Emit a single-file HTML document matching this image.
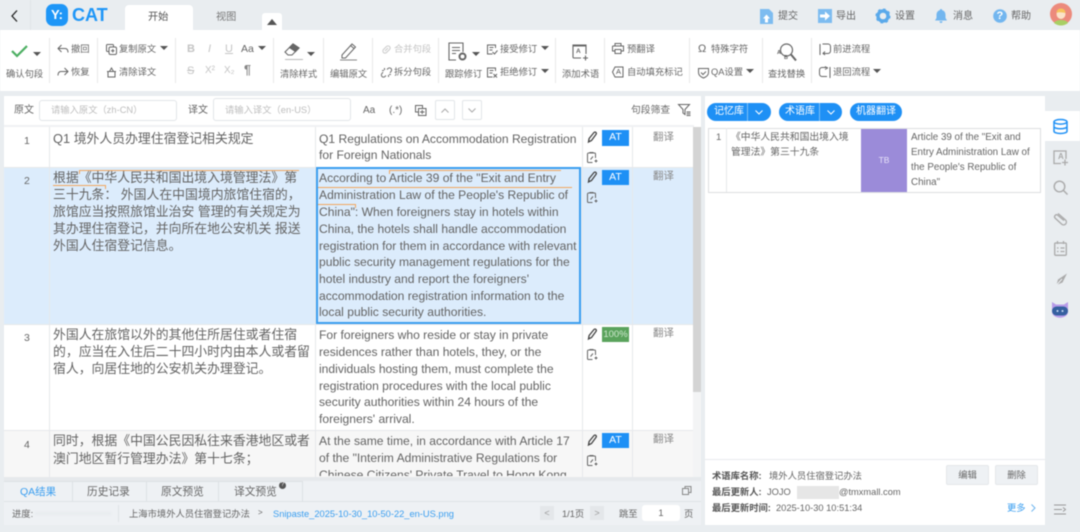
<!DOCTYPE html>
<html lang="zh"><head><meta charset="utf-8"><title>YiCAT</title>
<style>
html,body{margin:0;padding:0;width:1080px;height:532px;overflow:hidden;background:#e9edf0}
#r{position:relative;width:1080px;height:532px;overflow:hidden;font-family:"Liberation Sans","Noto Sans CJK SC",sans-serif;color:#666;filter:blur(.4px)}
.a{position:absolute}
.t{position:absolute;white-space:nowrap;line-height:16px;height:16px}
.s{font-size:9.3px}
.g{color:#c4c4c4}
.c{font-size:12.85px;color:#636363}
.e{font-size:12.1px;color:#636363}
.sep{position:absolute;width:1px;top:38px;height:45px;background:#e8e8e8}
svg{position:absolute;overflow:visible}
.tri{position:absolute;width:0;height:0;border-left:4px solid transparent;border-right:4px solid transparent;border-top:4px solid #555}
.at{position:absolute;left:602px;width:27px;height:15px;background:#1e90f5;color:#fff;font-size:10.5px;line-height:15px;text-align:center}
.ln{position:absolute;height:1px;background:#e6e8eb}
.v{position:absolute;width:1px;background:#e6e8eb}
.or{position:absolute;height:1px;background:#f2a65e}
.pill{position:absolute;top:103px;height:18px;border-radius:9px;background:#1e90f5;color:#fff;font-size:10px;line-height:18px}
.tr{color:#8a8a8a;font-size:10.5px}
</style></head><body><div id="r">

<!-- top bar -->
<div class="a" style="left:30px;top:0;width:1px;height:30px;background:#e0e4e7"></div>
<svg style="left:10px;top:9px" width="10" height="14" fill="none" stroke="#222" stroke-width="1.3"><path d="M7 1.500L2 7l5 5.500"/></svg>
<!-- logo -->
<div class="a" style="left:46px;top:4px;width:22px;height:22px;border-radius:7px;background:#1e96f7;color:#fff;font-weight:bold;font-size:13px;line-height:21px;text-align:center">Y:</div>
<div class="t" style="left:72px;top:6px;font-size:18px;font-weight:bold;color:#1e96f7;line-height:18px;height:18px">CAT</div>
<div class="a" style="left:125px;top:5px;width:68px;height:25px;background:#fff;border-radius:4px 4px 0 0"></div>
<div class="t" style="left:148px;top:10px;font-size:10.2px;color:#555">开始</div>
<div class="t" style="left:216px;top:10px;font-size:10.2px;color:#777">视图</div>
<div class="a" style="left:262px;top:13px;width:20px;height:17px;background:#fff;border-radius:3px 3px 0 0"></div>
<div class="a" style="left:267px;top:19px;width:0;height:0;border-left:5.500px solid transparent;border-right:5.500px solid transparent;border-bottom:6px solid #555"></div>

<svg style="left:760px;top:9px" width="14" height="15"><path d="M0 0h9l4 4v11H0z" fill="#7dbcf0"/><path d="M6.500 5.500l3.500 4H8v4H5v-4H3z" fill="#fff"/></svg>
<div class="t" style="left:778px;top:9px;font-size:10px">提交</div>
<svg style="left:818px;top:9px" width="14" height="14"><path d="M0 0h14v14H0z" fill="#7dbcf0"/><path d="M2 5.500h5V2.500l5 4.500-5 4.500V8.500H2z" fill="#fff"/></svg>
<div class="t" style="left:836px;top:9px;font-size:10px">导出</div>
<svg style="left:876px;top:9px" width="14" height="14"><circle cx="7" cy="7" r="5" fill="none" stroke="#5aa9ea" stroke-width="3.400"/><circle cx="7" cy="7" r="6.900" fill="none" stroke="#5aa9ea" stroke-width="1.300" stroke-dasharray="2.600 2.800"/></svg>
<div class="t" style="left:895px;top:9px;font-size:10px">设置</div>
<svg style="left:935px;top:9px" width="12" height="14"><path d="M6 0c.8 0 1.200.5 1.200 1.200C9.500 1.800 10.500 3.600 10.500 6v3L12 11.500H0L1.500 9V6c0-2.400 1-4.200 3.300-4.800C4.800.5 5.200 0 6 0zM4.500 12.300h3C7.500 13.300 6.800 14 6 14s-1.500-.7-1.500-1.700z" fill="#72b6ef"/></svg>
<div class="t" style="left:953px;top:9px;font-size:10px">消息</div>
<svg style="left:993px;top:9px" width="14" height="14"><circle cx="7" cy="7" r="6.800" fill="#72b6ef"/></svg>
<div class="t" style="left:996.500px;top:8px;font-size:11px;color:#fff;font-weight:bold">?</div>
<div class="t" style="left:1011px;top:9px;font-size:10px">帮助</div>
<svg style="left:1050px;top:3px" width="22" height="22"><circle cx="11" cy="11" r="11" fill="#ec8a7c"/><path d="M4 20c2-4 12-4 14 0a11 11 0 0 1-14 0z" fill="#a8cf64"/><ellipse cx="11" cy="11" rx="4.500" ry="5" fill="#fbe3c8"/><path d="M6.500 10c0-6 9-6 9 0-3-.5-6-1.500-9 0z" fill="#f6c35c"/></svg>

<!-- ribbon -->
<div class="a" style="left:0;top:30px;width:1080px;height:61px;background:#fff"></div>
<div class="sep" style="left:49px"></div><div class="sep" style="left:97px"></div><div class="sep" style="left:175px"></div><div class="sep" style="left:273px"></div><div class="sep" style="left:323px"></div><div class="sep" style="left:372px"></div><div class="sep" style="left:438px"></div><div class="sep" style="left:555px"></div><div class="sep" style="left:604px"></div><div class="sep" style="left:689px"></div><div class="sep" style="left:762px"></div><div class="sep" style="left:811px"></div>

<svg style="left:11px;top:45px" width="17" height="13" fill="none" stroke="#4caf62" stroke-width="2.200"><path d="M1 6l5 5L16 1"/></svg>
<div class="tri" style="left:33px;top:52px"></div>
<div class="t s" style="left:6px;top:66px">确认句段</div>

<svg style="left:57px;top:44px" width="12" height="10" fill="none" stroke="#666" stroke-width="1"><path d="M4.500 1L1 4.500 4.500 8M1 4.500h7c2 0 3 1.500 3 4"/></svg>
<div class="t s" style="left:71px;top:41px">撤回</div>
<svg style="left:57px;top:67px" width="12" height="10" fill="none" stroke="#666" stroke-width="1"><path d="M7.500 1L11 4.500 7.500 8M11 4.500H4c-2 0-3 1.500-3 4"/></svg>
<div class="t s" style="left:71px;top:64px">恢复</div>

<svg style="left:106px;top:44px" width="11" height="11" fill="none" stroke="#666" stroke-width="1"><rect x=".5" y=".5" width="7" height="7" rx="1"/><rect x="3" y="3" width="7.500" height="7.500" rx="1.500" fill="#fff"/><path d="M6.800 5v3.500M5 6.800h3.500"/></svg>
<div class="t s" style="left:119px;top:41px">复制原文</div>
<div class="tri" style="left:160px;top:46px"></div>
<svg style="left:106px;top:67px" width="11" height="11" fill="none" stroke="#666" stroke-width="1"><path d="M1 4.500h9M2 4.500v5.500h7V4.500M3.500 4.500L5.500 1l2 3.500"/></svg>
<div class="t s" style="left:119px;top:64px">清除译文</div>

<div class="t g" style="left:187px;top:41px;font-size:11px;font-weight:bold">B</div>
<div class="t g" style="left:208px;top:41px;font-size:11px;font-style:italic">I</div>
<div class="t g" style="left:225px;top:41px;font-size:11px;text-decoration:underline">U</div>
<div class="t" style="left:241px;top:41px;font-size:10.500px">Aa</div>
<div class="tri" style="left:258px;top:46px"></div>
<div class="t g" style="left:187px;top:63px;font-size:11px;text-decoration:line-through">S</div>
<div class="t g" style="left:205px;top:63px;font-size:10px">X²</div>
<div class="t g" style="left:224px;top:63px;font-size:10px">X₂</div>
<div class="t" style="left:244px;top:62px;font-size:12.500px;color:#888;font-weight:bold">¶</div>

<svg style="left:284px;top:42px" width="20" height="19" fill="none" stroke="#666" stroke-width="1.100"><path d="M1 10L9 2l6 4-7 7H4z"/><path d="M9 2l6 4-3.500 3.500-6-4z" fill="#666"/><path d="M1 17.500h18" stroke="#bbb"/></svg>
<div class="tri" style="left:307px;top:52px"></div>
<div class="t s" style="left:280px;top:66px">清除样式</div>

<svg style="left:340px;top:42px" width="18" height="19" fill="none" stroke="#666" stroke-width="1"><path d="M2 13L12 2l3.500 3L5.500 16H2z"/><path d="M10.500 3.500l3.500 3"/><path d="M0 18h17" stroke="#888"/></svg>
<div class="t s" style="left:330px;top:66px">编辑原文</div>

<svg style="left:381px;top:44px" width="11" height="11" fill="none" stroke="#ccc" stroke-width="1.100"><path d="M4 7l3-3M2.500 5.500l3-3a2 2 0 0 1 3 3l-3 3a2 2 0 0 1-3-3z"/></svg>
<div class="t s g" style="left:394px;top:41px">合并句段</div>
<svg style="left:381px;top:67px" width="11" height="11" fill="none" stroke="#777" stroke-width="1.100"><path d="M2 5l-1 1.500a2 2 0 0 0 3 3L5 8.500M9 6l1-1.500a2 2 0 0 0-3-3L6 2.500M3.500 1v2M1 3.500h2M7.500 10V8M10 7.500H8"/></svg>
<div class="t s" style="left:394px;top:64px">拆分句段</div>

<svg style="left:448px;top:42px" width="20" height="20" fill="none" stroke="#666" stroke-width="1.100"><path d="M8 18H1V1h14v9"/><path d="M4 5.500h8M4 8.500h8M4 11.500h4"/><circle cx="14.500" cy="14.500" r="3" stroke-width="2"/></svg>
<div class="tri" style="left:472px;top:52px"></div>
<div class="t s" style="left:445px;top:66px">跟踪修订</div>
<svg style="left:487px;top:44px" width="11" height="11" fill="none" stroke="#666" stroke-width="1"><path d="M8.500 4V1H.5v9h5M2.500 3.500h4M2.500 6h3M5.500 8l2 2 3-3.500"/></svg>
<div class="t s" style="left:500px;top:41px">接受修订</div>
<div class="tri" style="left:541px;top:46px"></div>
<svg style="left:487px;top:67px" width="11" height="11" fill="none" stroke="#666" stroke-width="1"><path d="M8.500 4V1H.5v9h5M2.500 3.500h4M2.500 6h3M6.500 7l3.500 3.500M10 7l-3.500 3.500"/></svg>
<div class="t s" style="left:500px;top:64px">拒绝修订</div>
<div class="tri" style="left:541px;top:69px"></div>

<svg style="left:572px;top:43px" width="17" height="18" fill="none" stroke="#666" stroke-width="1.100"><path d="M9 15H2a1 1 0 0 1-1-1V2h13v9"/><path d="M1 2.500h13" stroke-width="2"/><path d="M11 15h5M13.500 12.500v5"/></svg>
<div class="t" style="left:576px;top:47px;font-size:6.500px;font-weight:bold;color:#666;height:10px;line-height:10px">A</div>
<div class="t s" style="left:562px;top:66px">添加术语</div>

<svg style="left:612px;top:43px" width="12" height="11" fill="none" stroke="#666" stroke-width="1"><path d="M3 3V.5h6V3M.5 3h11v5H9M3 8H.5V3M3 6.500h6v4H3z"/></svg>
<div class="t s" style="left:627px;top:41px">预翻译</div>
<svg style="left:612px;top:66px" width="12" height="12" fill="none" stroke="#666" stroke-width="1"><path d="M3 1h8v10H3L.5 6z"/></svg>
<div class="t" style="left:616px;top:67px;font-size:7.500px;height:10px;line-height:10px;color:#555">A</div>
<div class="t s" style="left:627px;top:64px">自动填充标记</div>

<div class="t" style="left:698px;top:41px;font-size:11px">Ω</div>
<div class="t s" style="left:711px;top:41px">特殊字符</div>
<svg style="left:698px;top:67px" width="11" height="12" fill="none" stroke="#666" stroke-width="1"><path d="M.5 1.500h10v4c0 3-2.500 4.500-5 5.500-2.500-1-5-2.500-5-5.500zM3 5.500l2 2 3-3"/></svg>
<div class="t s" style="left:711px;top:64px">QA设置</div>
<div class="tri" style="left:746px;top:69px"></div>

<svg style="left:777px;top:43px" width="20" height="19" fill="none" stroke="#666" stroke-width="1.200"><circle cx="9.500" cy="7" r="6"/><path d="M14 11.500l5 6" stroke-width="2"/></svg>
<div class="t" style="left:777px;top:49px;font-size:5.500px;font-weight:bold;height:8px;line-height:8px">A</div>
<div class="t" style="left:784px;top:54px;font-size:5.500px;font-weight:bold;height:8px;line-height:8px">B</div>
<div class="t s" style="left:768px;top:66px">查找替换</div>

<svg style="left:819px;top:43px" width="12" height="12" fill="none" stroke="#666" stroke-width="1"><path d="M1 1v11M3.500 1H9a2.500 2.500 0 0 1 2.500 2.500V8A2.500 2.500 0 0 1 9 10.500H4M6 8.500l-2 2 2 1.500"/></svg>
<div class="t s" style="left:833px;top:41px">前进流程</div>
<svg style="left:819px;top:66px" width="12" height="12" fill="none" stroke="#666" stroke-width="1"><path d="M11 1v11M8.500 1.500H3A2.500 2.500 0 0 0 .5 4v4A2.500 2.500 0 0 0 3 10.500h5M6 .5l2.500 1.500L6 3.500"/></svg>
<div class="t s" style="left:833px;top:64px">退回流程</div>
<div class="tri" style="left:873px;top:69px"></div>

<!-- left panel -->
<div class="a" style="left:4px;top:96px;width:697px;height:385px;background:#fff"></div>
<div class="t" style="left:14px;top:103px;font-size:10px">原文</div>
<div class="a" style="left:39px;top:100px;width:136px;height:19px;border:1px solid #e2e5e8;border-radius:3px"></div>
<div class="t" style="left:51px;top:102px;font-size:9.300px;color:#bdbdbd">请输入原文（zh-CN）</div>
<div class="t" style="left:188px;top:103px;font-size:10px">译文</div>
<div class="a" style="left:213px;top:98px;width:136px;height:21px;border:1px solid #e2e5e8;border-radius:3px"></div>
<div class="t" style="left:225px;top:102px;font-size:9.300px;color:#bdbdbd">请输入译文（en-US）</div>
<div class="t" style="left:363px;top:103px;font-size:10px">Aa</div>
<div class="t" style="left:389px;top:103px;font-size:10px">(.*)</div>
<svg style="left:415px;top:105px" width="12" height="11" fill="none" stroke="#666" stroke-width="1"><rect x=".5" y=".5" width="7" height="6.500"/><rect x="3.500" y="3.500" width="7.500" height="7" fill="#fff"/><path d="M7.200 5v4M5 7h4.500"/></svg>
<div class="a" style="left:435px;top:100px;width:18px;height:18px;border:1px solid #e2e5e8;border-radius:2px"></div>
<svg style="left:441px;top:108px" width="8" height="5" fill="none" stroke="#aaa"><path d="M.5 4.500L4 1l3.500 3.500"/></svg>
<div class="a" style="left:462px;top:100px;width:18px;height:18px;border:1px solid #e2e5e8;border-radius:2px"></div>
<svg style="left:468px;top:108px" width="8" height="5" fill="none" stroke="#aaa"><path d="M.5.500L4 4l3.500-3.500"/></svg>
<div class="t" style="left:631px;top:103px;font-size:9.800px">句段筛查</div>
<svg style="left:678px;top:104px" width="13" height="12" fill="none" stroke="#666" stroke-width="1"><path d="M.5.500h11L7 5.500v5L5 9V5.500zM8.500 8h4M8.500 9.800h4M8.500 11.500h4"/></svg>

<!-- table -->
<div class="a" style="left:4px;top:125px;width:690px;height:2px;background:#f0f1f3"></div>
<div class="a" style="left:4px;top:167px;width:690px;height:157px;background:#dcecfc"></div>
<div class="a" style="left:4px;top:431px;width:690px;height:46px;background:#f7f7f7"></div>
<div class="ln" style="left:4px;top:324px;width:690px"></div>
<div class="ln" style="left:4px;top:430px;width:690px"></div>
<div class="ln" style="left:4px;top:167px;width:690px"></div>
<div class="v" style="left:49px;top:127px;height:350px"></div>
<div class="v" style="left:315px;top:127px;height:350px"></div>
<div class="v" style="left:582px;top:127px;height:350px"></div>
<div class="v" style="left:632px;top:127px;height:350px"></div>
<div class="a" style="left:693px;top:127px;width:8px;height:350px;background:#f3f4f5"></div>
<div class="a" style="left:693px;top:127px;width:8px;height:265px;background:#d4d4d4"></div>
<div class="a" style="left:316px;top:167px;width:261px;height:153px;border:2px solid #3a9ef0"></div>

<div class="t" style="left:24px;top:133px;font-size:10.500px">1</div>
<div class="t" style="left:24px;top:173px;font-size:10.500px">2</div>
<div class="t" style="left:24px;top:330px;font-size:10.500px">3</div>
<div class="t" style="left:24px;top:437px;font-size:10.500px">4</div>

<div class="t c" style="left:53px;top:131px">Q1 境外人员办理住宿登记相关规定</div>
<div class="t c" style="left:53px;top:170px">根据《中华人民共和国出境入境管理法》第</div>
<div class="t c" style="left:53px;top:187px">三十九条： 外国人在中国境内旅馆住宿的，</div>
<div class="t c" style="left:53px;top:204px">旅馆应当按照旅馆业治安 管理的有关规定为</div>
<div class="t c" style="left:53px;top:221px">其办理住宿登记，并向所在地公安机关 报送</div>
<div class="t c" style="left:53px;top:238px">外国人住宿登记信息。</div>
<div class="or" style="left:79px;top:170px;width:220px"></div>
<div class="or" style="left:53px;top:185px;width:52px"></div>
<div class="or" style="left:79px;top:170px;width:1px;height:4px"></div>
<div class="or" style="left:105px;top:185px;width:1px;height:4px"></div>
<div class="t c" style="left:53px;top:327px">外国人在旅馆以外的其他住所居住或者住宿</div>
<div class="t c" style="left:53px;top:344px">的，应当在入住后二十四小时内由本人或者留</div>
<div class="t c" style="left:53px;top:361px">宿人，向居住地的公安机关办理登记。</div>
<div class="t c" style="left:53px;top:433px">同时，根据《中国公民因私往来香港地区或者</div>
<div class="t c" style="left:53px;top:451px">澳门地区暂行管理办法》第十七条；</div>

<div class="t e" style="left:319px;top:131px">Q1 Regulations on Accommodation Registration</div>
<div class="t e" style="left:319px;top:147px">for Foreign Nationals</div>
<div class="t e" style="left:319px;top:170px">According to Article 39 of the "Exit and Entry</div>
<div class="t e" style="left:319px;top:187px">Administration Law of the People's Republic of</div>
<div class="t e" style="left:319px;top:204px">China": When foreigners stay in hotels within</div>
<div class="t e" style="left:319px;top:221px">China, the hotels shall handle accommodation</div>
<div class="t e" style="left:319px;top:238px">registration for them in accordance with relevant</div>
<div class="t e" style="left:319px;top:254px">public security management regulations for the</div>
<div class="t e" style="left:319px;top:271px">hotel industry and report the foreigners'</div>
<div class="t e" style="left:319px;top:288px">accommodation registration information to the</div>
<div class="t e" style="left:319px;top:304px">local public security authorities.</div>
<div class="or" style="left:389px;top:170px;width:172px"></div>
<div class="or" style="left:389px;top:170px;width:1px;height:4px"></div>
<div class="or" style="left:318px;top:187px;width:254px"></div>
<div class="or" style="left:318px;top:204px;width:38px"></div>
<div class="or" style="left:355px;top:204px;width:1px;height:4px"></div>
<div class="t e" style="left:319px;top:327px">For foreigners who reside or stay in private</div>
<div class="t e" style="left:319px;top:344px">residences rather than hotels, they, or the</div>
<div class="t e" style="left:319px;top:361px">individuals hosting them, must complete the</div>
<div class="t e" style="left:319px;top:378px">registration procedures with the local public</div>
<div class="t e" style="left:319px;top:394px">security authorities within 24 hours of the</div>
<div class="t e" style="left:319px;top:411px">foreigners' arrival.</div>
<div class="t e" style="left:319px;top:433px">At the same time, in accordance with Article 17</div>
<div class="t e" style="left:319px;top:450px">of the "Interim Administrative Regulations for</div>
<div class="t e" style="left:319px;top:467px;height:9px;overflow:hidden">Chinese Citizens' Private Travel to Hong Kong</div>

<div class="at" style="top:130px;height:16px">AT</div>
<div class="at" style="top:170px">AT</div>
<div class="at" style="top:327px;background:#5aa35c;color:#cfe8cf;font-size:9.500px">100%</div>
<div class="at" style="top:433px">AT</div>
<svg style="left:587px;top:131px" width="10" height="12" fill="none" stroke="#444" stroke-width="1.300"><path d="M1.500 11l.6-3.500L7 1.500c.6-.7 1.500-.7 2 0s.4 1.400-.1 2L4.500 9.500z"/></svg>
<svg style="left:587px;top:171px" width="10" height="12" fill="none" stroke="#444" stroke-width="1.300"><path d="M1.500 11l.6-3.500L7 1.500c.6-.7 1.500-.7 2 0s.4 1.400-.1 2L4.500 9.500z"/></svg>
<svg style="left:587px;top:328px" width="10" height="12" fill="none" stroke="#444" stroke-width="1.300"><path d="M1.500 11l.6-3.500L7 1.500c.6-.7 1.500-.7 2 0s.4 1.400-.1 2L4.500 9.500z"/></svg>
<svg style="left:587px;top:434px" width="10" height="12" fill="none" stroke="#444" stroke-width="1.300"><path d="M1.500 11l.6-3.500L7 1.500c.6-.7 1.500-.7 2 0s.4 1.400-.1 2L4.500 9.500z"/></svg>
<svg style="left:587px;top:152px" width="11" height="11" fill="none" stroke="#666"><path d="M5.500 10.500H1.500a1 1 0 0 1-1-1V2a1 1 0 0 1 1-1h6a1 1 0 0 1 1 1v4M2.500.500h4M3.500 7.500l2.500-3M7.500 9h3M9 7.500v3"/></svg>
<svg style="left:587px;top:192px" width="11" height="11" fill="none" stroke="#666"><path d="M5.500 10.500H1.500a1 1 0 0 1-1-1V2a1 1 0 0 1 1-1h6a1 1 0 0 1 1 1v4M2.500.500h4M3.500 7.500l2.500-3M7.500 9h3M9 7.500v3"/></svg>
<svg style="left:587px;top:349px" width="11" height="11" fill="none" stroke="#666"><path d="M5.500 10.500H1.500a1 1 0 0 1-1-1V2a1 1 0 0 1 1-1h6a1 1 0 0 1 1 1v4M2.500.500h4M3.500 7.500l2.500-3M7.500 9h3M9 7.500v3"/></svg>
<svg style="left:587px;top:455px" width="11" height="11" fill="none" stroke="#666"><path d="M5.500 10.500H1.500a1 1 0 0 1-1-1V2a1 1 0 0 1 1-1h6a1 1 0 0 1 1 1v4M2.500.500h4M3.500 7.500l2.500-3M7.500 9h3M9 7.500v3"/></svg>
<div class="t tr" style="left:653px;top:129px">翻译</div>
<div class="t tr" style="left:653px;top:168px">翻译</div>
<div class="t tr" style="left:653px;top:325px">翻译</div>
<div class="t tr" style="left:653px;top:431px">翻译</div>

<!-- bottom -->
<div class="a" style="left:4px;top:477px;width:697px;height:4px;background:#e6e9ec"></div>
<div class="a" style="left:4px;top:481px;width:697px;height:44px;background:#eef1f4"></div>
<div class="ln" style="left:4px;top:501px;width:697px;background:#dfe3e6"></div>
<div class="a" style="left:4px;top:481px;width:298px;height:20px;border-top:1px solid #dde1e4;border-right:1px solid #dde1e4"></div>
<div class="v" style="left:72px;top:481px;height:20px;background:#dde1e4"></div>
<div class="v" style="left:146px;top:481px;height:20px;background:#dde1e4"></div>
<div class="v" style="left:218px;top:481px;height:20px;background:#dde1e4"></div>
<div class="t" style="left:20px;top:484px;font-size:10.500px;color:#3a9ef0">QA结果</div>
<div class="t" style="left:87px;top:484px;font-size:10.700px">历史记录</div>
<div class="t" style="left:161px;top:484px;font-size:10.700px">原文预览</div>
<div class="t" style="left:234px;top:484px;font-size:10.700px">译文预览</div>
<div class="a" style="left:279px;top:482px;width:7px;height:7px;border-radius:50%;background:#555;color:#fff;font-size:6px;line-height:7px;text-align:center">?</div>
<svg style="left:682px;top:486px" width="10" height="10" fill="none" stroke="#888"><rect x="3" y=".5" width="6" height="6"/><rect x=".5" y="2.500" width="6" height="6" fill="#eef1f4"/></svg>
<div class="t s" style="left:12px;top:505.500px">进度:</div>
<div class="a" style="left:35px;top:512px;width:76px;height:3px;background:#e7ebef;filter:blur(1px)"></div>
<div class="v" style="left:118px;top:505px;height:17px;background:#dfe3e6"></div>
<div class="t s" style="left:129px;top:505.500px">上海市境外人员住宿登记办法</div>
<div class="t s" style="left:258px;top:505px;font-size:8px">&gt;</div>
<div class="t" style="left:273px;top:505.500px;font-size:9.300px;color:#3a9ef0">Snipaste_2025-10-30_10-50-22_en-US.png</div>
<div class="a" style="left:540px;top:506px;width:14px;height:14px;background:#e4e7ea;color:#999;font-size:9px;line-height:14px;text-align:center">&lt;</div>
<div class="t s" style="left:562px;top:505.500px">1/1页</div>
<div class="a" style="left:590px;top:506px;width:14px;height:14px;background:#e4e7ea;color:#999;font-size:9px;line-height:14px;text-align:center">&gt;</div>
<div class="t s" style="left:619px;top:505.500px">跳至</div>
<div class="a" style="left:642px;top:505px;width:38px;height:16px;background:#fff;border-radius:3px;color:#666;font-size:9.300px;line-height:16px;text-align:center">1</div>
<div class="t s" style="left:684px;top:505.500px">页</div>

<!-- right panel -->
<div class="a" style="left:705px;top:96px;width:340px;height:429px;background:#fff"></div>
<div class="pill" style="left:707px;width:64px"><span class="a" style="left:7px">记忆库</span><span class="a" style="left:40px;top:0;width:1px;height:18px;background:#7dbef5"></span></div>
<svg style="left:755px;top:110px" width="8" height="5" fill="none" stroke="#fff"><path d="M.5.500L4 4l3.500-3.500"/></svg>
<div class="pill" style="left:779px;width:63px"><span class="a" style="left:6px">术语库</span><span class="a" style="left:40px;top:0;width:1px;height:18px;background:#7dbef5"></span></div>
<svg style="left:827px;top:110px" width="8" height="5" fill="none" stroke="#fff"><path d="M.5.500L4 4l3.500-3.500"/></svg>
<div class="pill" style="left:850px;width:52px;text-align:center">机器翻译</div>
<div class="a" style="left:708px;top:128px;width:331px;height:63px;border:1px solid #dcdee1"></div>
<div class="v" style="left:726px;top:128px;height:64px"></div>
<div class="a" style="left:861px;top:129px;width:46px;height:63px;background:#9b8bd9;color:#e7e2f8;font-size:8.500px;line-height:63px;text-align:center">TB</div>
<div class="t" style="left:716px;top:130px;font-size:9.500px">1</div>
<div class="t" style="left:731px;top:130px;font-size:9.800px">《中华人民共和国出境入境</div>
<div class="t" style="left:731px;top:145px;font-size:9.800px">管理法》第三十九条</div>
<div class="t" style="left:911px;top:130px;font-size:9.800px">Article 39 of the "Exit and</div>
<div class="t" style="left:911px;top:145px;font-size:9.800px">Entry Administration Law of</div>
<div class="t" style="left:911px;top:160px;font-size:9.800px">the People's Republic of</div>
<div class="t" style="left:911px;top:175px;font-size:9.800px">China"</div>

<div class="ln" style="left:705px;top:459px;width:340px;background:#e8ebee"></div>
<div class="t s" style="left:712px;top:468px;font-weight:bold;color:#555">术语库名称:</div>
<div class="t s" style="left:769px;top:468px">境外人员住宿登记办法</div>
<div class="t s" style="left:712px;top:484px;font-weight:bold;color:#555">最后更新人:</div>
<div class="t s" style="left:767px;top:484px">JOJO</div>
<div class="a" style="left:797px;top:486px;width:42px;height:13px;background:#e6e6e6"></div>
<div class="t s" style="left:839px;top:484px">@tmxmall.com</div>
<div class="t s" style="left:712px;top:500px;font-weight:bold;color:#555">最后更新时间:</div>
<div class="t s" style="left:776px;top:500px">2025-10-30 10:51:34</div>
<div class="a" style="left:946px;top:465px;width:41px;height:18px;background:#eef1f4;border:1px solid #e4e7ea;border-radius:2px;font-size:9.300px;line-height:18px;text-align:center">编辑</div>
<div class="a" style="left:995px;top:465px;width:41px;height:18px;background:#eef1f4;border:1px solid #e4e7ea;border-radius:2px;font-size:9.300px;line-height:18px;text-align:center">删除</div>
<div class="t s" style="left:1007px;top:500px;color:#3a9ef0">更多</div>
<svg style="left:1031px;top:504px" width="5" height="8" fill="none" stroke="#6fb5ee"><path d="M.5.500L4 4 .5 7.500"/></svg>

<!-- rail -->
<div class="a" style="left:1045px;top:111px;width:35px;height:30px;background:#fff"></div>
<svg style="left:1053px;top:119px" width="15" height="15" fill="none" stroke="#1e90f5" stroke-width="1.500"><ellipse cx="7.500" cy="2.800" rx="6.500" ry="2.300"/><path d="M1 2.800v9.400c0 1.300 2.900 2.300 6.500 2.300s6.500-1 6.500-2.300V2.800M1 7.500c0 1.300 2.900 2.300 6.500 2.300S14 8.800 14 7.500"/></svg>
<svg style="left:1053px;top:150px" width="15" height="15" fill="none" stroke="#aaa" stroke-width="1.300"><path d="M8 13.500H1V1h12v8"/><path d="M9 12.500h6M12 9.500v6"/></svg>
<div class="t" style="left:1058px;top:151px;font-size:8px;color:#aaa;font-weight:bold;height:12px;line-height:12px">A</div>
<svg style="left:1053px;top:180px" width="15" height="15" fill="none" stroke="#aaa" stroke-width="1.400"><circle cx="6.500" cy="6.500" r="5.300"/><path d="M10.500 10.500l4 4"/></svg>
<svg style="left:1053px;top:211px" width="15" height="15" fill="none" stroke="#aaa" stroke-width="1.300"><path d="M5 2.500l7.500 6.500a2.800 2.800 0 0 1-3.700 4.200L2 7a2 2 0 0 1 2.500-3l6.500 5.500"/></svg>
<svg style="left:1054px;top:241px" width="13" height="15" fill="none" stroke="#aaa" stroke-width="1.300"><rect x=".7" y="2" width="11.600" height="12.300" rx="1"/><path d="M3.500 0v3M9.500 0v3M3 7h1.500M6.500 7h4M3 10.500h1.500M6.500 10.500h4"/></svg>
<svg style="left:1055px;top:273px" width="12" height="13"><path d="M12 .5L7.500 9.500 1.500 12 3 6.500z" fill="#aaa"/><path d="M1.500 12L7 6" stroke="#eef1f4"/></svg>
<svg style="left:1052px;top:302px" width="16" height="15"><path d="M0 0l4 2.500h8L16 0v10a7 5 0 0 1-16 0z" fill="#b79be8"/><rect x="0" y="4.500" width="16" height="9" rx="4.500" fill="#35609f"/><circle cx="5.500" cy="9" r="1" fill="#cfe0fa"/><circle cx="10.500" cy="9" r="1" fill="#cfe0fa"/></svg>
<svg style="left:1054px;top:504px" width="13" height="11" fill="none" stroke="#999"><path d="M0 1h12M0 5.500h8M0 10h12M9 3.500l2.500 2L9 7.500"/></svg>
</div></body></html>
